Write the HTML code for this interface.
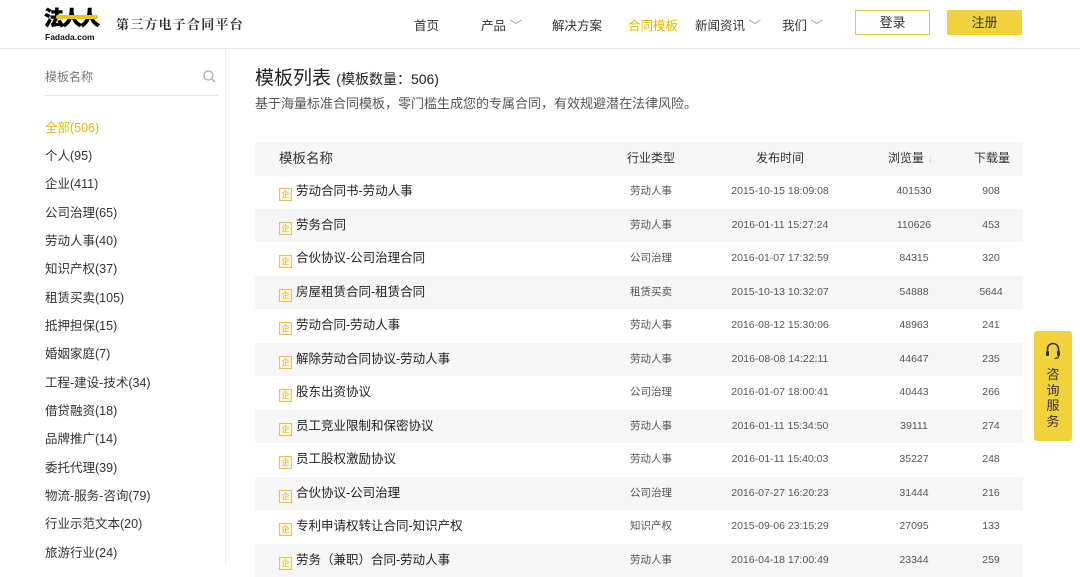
<!DOCTYPE html>
<html><head><meta charset="utf-8"><style>
*{margin:0;padding:0;box-sizing:border-box}
body{width:1080px;height:565px;overflow:hidden;background:#fff;font-family:"Liberation Sans","Noto Sans CJK SC",sans-serif;color:#333;position:relative}
.hdr{position:absolute;left:0;top:0;width:1080px;height:49px;border-bottom:1px solid #e8e8e8;background:#fff}
.logo{position:absolute;left:44px;top:7px;width:60px;height:34px;white-space:nowrap}
.logo .t{position:absolute;left:0;top:0;font-size:20px;font-weight:900;color:#000;letter-spacing:-2px;line-height:25px;-webkit-text-stroke:0.6px #000;white-space:nowrap}
.logo .bar{position:absolute;left:12px;top:8px;width:42px;height:4px;background:#f0c419;border-radius:2px;z-index:2}
.logo .d{position:absolute;left:1px;top:25px;font-size:8.5px;font-weight:bold;color:#111}
.slogan{position:absolute;left:116px;top:14px;font-size:13px;color:#333;letter-spacing:1.2px;font-weight:bold;font-family:"Liberation Serif","Noto Serif CJK SC",serif}
.nav{position:absolute;top:15px;font-size:12.5px;color:#333}
.btn{position:absolute;top:10px;width:75px;height:25px;font-size:13px;text-align:center;line-height:23px}
.side{position:absolute;left:0;top:49px;width:226px;height:516px;border-right:1px solid #eee}
.search{position:absolute;left:45px;top:68px;width:173px;height:28px;border-bottom:1px solid #e6e6e6;font-size:12px;color:#777}
.cat{position:absolute;left:45px;font-size:12.5px;color:#333}
.title{position:absolute;left:255px;top:63px;font-size:19px;color:#222}
.title span{font-size:14px}
.sub{position:absolute;left:255px;top:93px;font-size:13px;color:#555}
.row{position:absolute;left:255px;width:768px;height:33.5px;font-size:12.5px}
.row.g{background:#f6f6f6}
.row div{position:absolute;top:0;line-height:33.5px;white-space:nowrap}
.c2,.c3,.c4,.c5{font-size:10.5px;color:#555;text-align:center}
.ic{display:inline-block;width:13px;height:13px;border:1px solid #e8c547;background:#fdf6d8;vertical-align:-2px;margin-right:4px;font-size:8px;line-height:11px;text-align:center;color:#d4a82a}
.kefu{position:absolute;left:1034px;top:331px;width:38px;height:110px;background:#f2d23a;border-radius:3px;text-align:center;font-size:13px;color:#333}
</style></head><body>
<div class="hdr">
 <div class="logo"><div class="t">法人人</div><div class="bar"></div><div class="d">Fadada.com</div></div>
 <div class="slogan">第三方电子合同平台</div>
 <div class="nav" style="left:414px">首页</div>
 <div class="nav" style="left:481px">产品 <span style="color:#999">﹀</span></div>
 <div class="nav" style="left:552px">解决方案</div>
 <div class="nav" style="left:628px;color:#e6b800">合同模板</div>
 <div class="nav" style="left:695px">新闻资讯 <span style="color:#999">﹀</span></div>
 <div class="nav" style="left:782px">我们 <span style="color:#999">﹀</span></div>
 <div class="btn" style="left:855px;border:1px solid #e8c547;color:#333">登录</div>
 <div class="btn" style="left:947px;background:#f2d23a;color:#333;border:1px solid #f2d23a">注册</div>
</div>
<div class="side">
 <div class="search" style="top:19px">模板名称
  <svg style="position:absolute;right:2px;top:2px" width="13" height="13" viewBox="0 0 13 13"><circle cx="5.5" cy="5.5" r="4.5" fill="none" stroke="#aaa" stroke-width="1.2"/><path d="M9 9l3 3" stroke="#aaa" stroke-width="1.3"/></svg>
 </div>
</div>
<div class="cat" style="top:117px;color:#e6b800">全部(506)</div>
<div class="cat" style="top:145px">个人(95)</div>
<div class="cat" style="top:173px">企业(411)</div>
<div class="cat" style="top:202px">公司治理(65)</div>
<div class="cat" style="top:230px">劳动人事(40)</div>
<div class="cat" style="top:258px">知识产权(37)</div>
<div class="cat" style="top:287px">租赁买卖(105)</div>
<div class="cat" style="top:315px">抵押担保(15)</div>
<div class="cat" style="top:343px">婚姻家庭(7)</div>
<div class="cat" style="top:372px">工程-建设-技术(34)</div>
<div class="cat" style="top:400px">借贷融资(18)</div>
<div class="cat" style="top:428px">品牌推广(14)</div>
<div class="cat" style="top:457px">委托代理(39)</div>
<div class="cat" style="top:485px">物流-服务-咨询(79)</div>
<div class="cat" style="top:513px">行业示范文本(20)</div>
<div class="cat" style="top:542px">旅游行业(24)</div>

<div class="title">模板列表 <span>(模板数量：506)</span></div>
<div class="sub">基于海量标准合同模板，零门槛生成您的专属合同，有效规避潜在法律风险。</div>

<div class="row g" style="top:142px;font-size:13px">
 <div style="left:24px;font-size:13.5px">模板名称</div>
 <div style="left:372px;font-size:12px">行业类型</div>
 <div style="left:501px;font-size:12px">发布时间</div>
 <div style="left:633px;font-size:12px">浏览量 <span style="color:#ccc">↓</span></div>
 <div style="left:719px;font-size:12px">下载量</div>
</div>
<div id="rows"></div>
<script>
var d=[["劳动合同书-劳动人事","劳动人事","2015-10-15 18:09:08","401530","908"],
["劳务合同","劳动人事","2016-01-11 15:27:24","110626","453"],
["合伙协议-公司治理合同","公司治理","2016-01-07 17:32:59","84315","320"],
["房屋租赁合同-租赁合同","租赁买卖","2015-10-13 10:32:07","54888","5644"],
["劳动合同-劳动人事","劳动人事","2016-08-12 15:30:06","48963","241"],
["解除劳动合同协议-劳动人事","劳动人事","2016-08-08 14:22:11","44647","235"],
["股东出资协议","公司治理","2016-01-07 18:00:41","40443","266"],
["员工竞业限制和保密协议","劳动人事","2016-01-11 15:34:50","39111","274"],
["员工股权激励协议","劳动人事","2016-01-11 15:40:03","35227","248"],
["合伙协议-公司治理","公司治理","2016-07-27 16:20:23","31444","216"],
["专利申请权转让合同-知识产权","知识产权","2015-09-06 23:15:29","27095","133"],
["劳务（兼职）合同-劳动人事","劳动人事","2016-04-18 17:00:49","23344","259"]];
var h="";
d.forEach(function(r,i){
 h+='<div class="row'+(i%2?' g':'')+'" style="top:'+(175+i*33.5)+'px">'+
 '<div style="left:24px;font-size:12.5px;color:#222"><span class="ic">企</span>'+r[0]+'</div>'+
 '<div class="c2" style="left:346px;width:100px">'+r[1]+'</div>'+
 '<div class="c3" style="left:465px;width:120px">'+r[2]+'</div>'+
 '<div class="c4" style="left:619px;width:80px">'+r[3]+'</div>'+
 '<div class="c5" style="left:706px;width:60px">'+r[4]+'</div></div>';
});
document.getElementById('rows').innerHTML=h;
</script>
<div class="kefu">
 <svg style="margin-top:11px" width="16" height="18" viewBox="0 0 16 18"><path d="M2.5 10V7a5.5 5.5 0 0 1 11 0v3" fill="none" stroke="#333" stroke-width="1.6"/><rect x="1" y="9" width="3" height="5" rx="1" fill="#333"/><rect x="12" y="9" width="3" height="5" rx="1" fill="#333"/><path d="M13.5 14q0 2.5-4 2.5" fill="none" stroke="#333" stroke-width="1.2"/></svg>
 <div style="line-height:15.5px;margin-top:4px">咨<br>询<br>服<br>务</div>
</div>
</body></html>
